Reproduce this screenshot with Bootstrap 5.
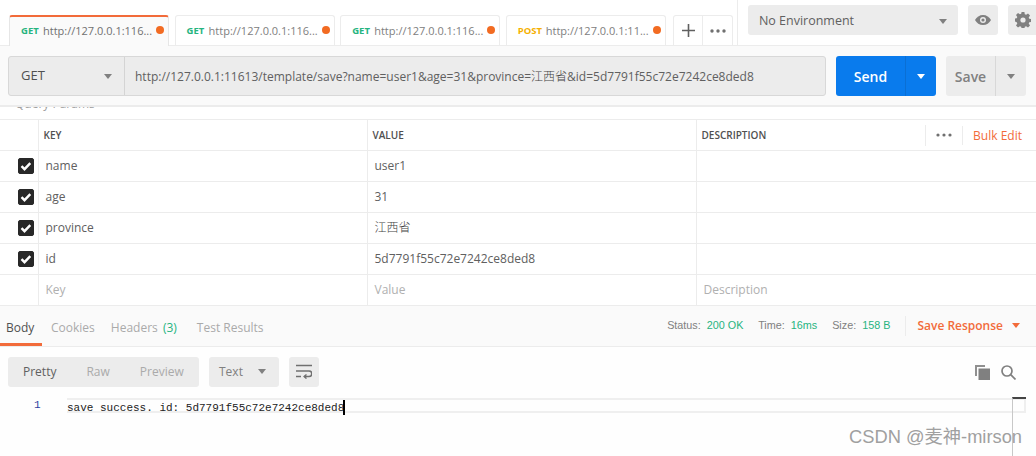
<!DOCTYPE html>
<html lang="zh">
  <head>
    <meta charset="UTF-8" />
    <title>Postman</title>
    <link href="https://cdn.jsdelivr.net/npm/bootstrap@5.3.3/dist/css/bootstrap.min.css" rel="stylesheet" />
    <style>
      html, body { height: 456px; overflow: hidden; }
      body {
        background-color: #fefefe;
        color: #505050;
        font-family: "Open Sans", "Noto Sans CJK SC", sans-serif;
        font-size: 12px;
      }
      .cjk { font-family: "Noto Sans CJK SC", sans-serif; color: #444; font-weight: 300; }

      /* top tabs */
      .top-bar { height: 45px; background: #fff; padding-left: 9px; }
      .req-tab {
        width: 160px; height: 30px; margin-top: 15px; margin-right: 5.6px; flex: none;
        border: 1px solid #ececec; border-bottom: 0; border-radius: 3px 3px 0 0;
        padding: 2px 4px 0 11px; font-size: 11px; color: #808080; white-space: nowrap;
        background: #fff;
      }
      .req-tab.on { border-top: 2px solid #f26b3a; border-left-color: #e6e6e6; border-right-color: #e6e6e6; color: #707070; position: relative; height: 31px; z-index: 2; background: #fafafa; padding-top: 0; }
      .verb { font-size: 9.5px; font-weight: 700; width: 22px; flex: none; }
      .verb-get { color: #26b47f; }
      .verb-post { color: #f5b000; width: 28px; }
      .tab-url { flex: 1; min-width: 0; }
      .dot { width: 8px; height: 8px; border-radius: 50%; background: #f26b22; flex: none; margin-left: 3px; margin-top: -3px; }
      .add-group {
        width: 60px; height: 30px; margin-top: 15px; margin-left: 1.5px; flex: none;
        border: 1px solid #ececec; border-bottom: 0; border-radius: 3px 3px 0 0;
      }
      .add-group > div { flex: 1; }
      .add-group > div + div { border-left: 1px solid #ececec; }
      .env-side { border-left: 1px solid #ececec; margin-left: 4px; padding-left: 10px; height: 45px; padding-top: 5px; gap: 10px; width: 305px; flex: none; }
      .env-select { width: 210px; height: 30px; background: #ececec; border-radius: 3px; padding: 2px 11px 0; font-size: 12.5px; color: #606060; flex: none; }
      .env-btn { width: 30px; height: 30px; background: #ececec; border-radius: 3px; flex: none; }
      .caret-dn { width: 0; height: 0; border-left: 4.5px solid transparent; border-right: 4.5px solid transparent; border-top: 5px solid #808080; flex: none; }
      .caret-white { border-top-color: #fff; }
      .caret-orange { border-top-color: #f26b3a; }

      /* request bar */
      .req-bar { height: 62px; background: #fafafa; border-top: 1px solid #ececec; border-bottom: 2px solid #ececec; padding: 10px 10px 0 8px; }
      .req-input { height: 40px; width: 818px; background: #ececec; border: 1px solid #d8d8d8; border-radius: 3px; flex: none; }
      .req-method { width: 116px; border-right: 1px solid #d4d4d4; padding: 0 12px; font-size: 13px; color: #505050; flex: none; }
      .req-url { padding-left: 10px; font-size: 12px; color: #606060; white-space: nowrap; }
      .send-btn { width: 100px; height: 40px; margin-left: 10px; padding: 0; background: #097bed; border-radius: 3px; color: #fff; font-size: 14px; font-weight: 600; flex: none; }
      .send-btn > span:first-child { width: 69px; }
      .send-btn > span:last-child { flex: 1; align-self: stretch; border-left: 1px solid #0a6fd4; }
      .save-btn { width: 80px; height: 40px; margin-left: 10px; background: #ececec; border-radius: 3px; color: #808080; font-size: 14px; font-weight: 600; flex: none; }
      .save-btn > span:first-child { width: 49px; }
      .save-btn > span:last-child { flex: 1; align-self: stretch; border-left: 1px solid #d8d8d8; }

      /* params */
      .params-cut { height: 12px; overflow: hidden; background: #fff; color: #a0a0a0; font-size: 12px; padding-left: 15px; border-bottom: 1px solid #ececec; box-sizing: content-box; }
      .params-cut span { display: block; line-height: 12px; margin-top: -9px; }
      .param-table { table-layout: fixed; width: 100%; margin: 0; --bs-table-bg: #fff; border-color: #ececec; }
      .param-table td, .param-table th { height: 31px; padding: 0 7px; border: 0; border-bottom: 1px solid #ececec; border-left: 1px solid #ececec; vertical-align: middle; font-size: 12px; color: #606060; font-weight: 400; box-shadow: none; }
      .param-table th { font-size: 10px; font-weight: 600; color: #505050; padding: 1px 5px 0; height: 30px; }
      .param-table tr > :first-child { border-left: 0; padding: 0 0 0 18px; }
      .param-table .ph { color: #b0b0b0; }
      .form-check-input.tick {
        width: 16px; height: 16px; margin: 0; display: block; border-radius: 2px;
        background-color: #282828; border-color: #282828; opacity: 1; background-size: 16px;
        background-image: url("data:image/svg+xml,%3csvg xmlns='http://www.w3.org/2000/svg' viewBox='0 0 16 16'%3e%3cpath fill='none' stroke='%23fff' stroke-width='2.4' d='M3.500 8.200l3 3 5.800-6'/%3e%3c/svg%3e");
      }
      .desc-tools { height: 21px; }
      .bulk { color: #f26b3a; font-size: 12px; font-weight: 400; padding: 2px 9px 0 10px; border-left: 1px solid #ececec; line-height: 16px; height: 19px; }
      .desc-dots { border-left: 1px solid #ececec; padding: 0 10px; height: 21px; }

      /* response */
      .res-tabs { height: 41px; background: #fafafa; border-bottom: 1px solid #ececec; padding-right: 16px; }
      .res-tab { height: 40px; padding: 0 6px; margin-right: 4px; font-size: 12px; color: #aaa; line-height: 44px; white-space: nowrap; }
      .res-tab.on { color: #505050; border-bottom: 3px solid #f26b3a; width: 42px; margin-right: 3px; }
      .green { color: #26b47f; }
      .res-tab .green { margin-left: 2px; }
      .res-meta { font-family: "Liberation Sans", sans-serif; font-size: 10.8px; color: #808080; white-space: nowrap; }
      .res-meta b { font-weight: 400; margin-left: 3px; margin-right: 12px; }
      .save-res { color: #f26b3a; font-size: 12px; font-weight: 600; border-left: 1px solid #ececec; height: 20px; margin-left: 3px; padding-left: 11px; gap: 9px; white-space: nowrap; }
      .res-tools { padding: 10px 9px 0 8px; height: 41px; gap: 10px; }
      .grey-box { height: 30px; background: #ececec; border-radius: 3px; font-size: 12px; color: #aaa; flex: none; }
      .fmt-group { width: 191px; padding-left: 15px; gap: 30px; }
      .fmt-group .act { color: #606060; }
      .type-box { width: 70px; padding: 0 13px 0 10px; color: #808080; }
      .wrap-box { width: 30px; }
      .res-icons { margin-top: 8px; margin-right: 11px; gap: 11px; }
      .code-wrap { margin-top: 10px; padding-left: 34px; height: 15px; }
      .ln { width: 33px; color: #2f3f9e; font-family: "Liberation Mono", monospace; font-size: 11px; line-height: 15px; flex: none; }
      .code-line { width: 959px; height: 15px; border: 2px solid #efefef; border-left: 0; font-family: "Liberation Mono", monospace; font-size: 11px; line-height: 9px; color: #222; white-space: nowrap; }
      .cursor { display: inline-block; width: 2px; height: 15px; background: #000; vertical-align: -4px; margin-left: -1px; }
      .scroll-mark { position: absolute; left: 1012px; top: 397px; bottom: 0; width: 14px; border-left: 1px solid #c8c8c8; border-top: 2px solid #444; }
      .wm { position: absolute; right: 14px; top: 426px; font-family: "Liberation Sans", "Noto Sans CJK SC", sans-serif; font-size: 18.3px; line-height: 22px; color: #a0a0a0; white-space: nowrap; }
    </style>
  </head>
  <body class="position-relative">
    <!-- top tabs -->
    <div class="top-bar d-flex">
      <div class="req-tab on d-flex align-items-center"><span class="verb verb-get">GET</span><span class="tab-url">http://127.0.0.1:116...</span><span class="dot"></span></div>
      <div class="req-tab d-flex align-items-center"><span class="verb verb-get">GET</span><span class="tab-url">http://127.0.0.1:116...</span><span class="dot"></span></div>
      <div class="req-tab d-flex align-items-center"><span class="verb verb-get">GET</span><span class="tab-url">http://127.0.0.1:116...</span><span class="dot"></span></div>
      <div class="req-tab d-flex align-items-center"><span class="verb verb-post">POST</span><span class="tab-url">http://127.0.0.1:11...</span><span class="dot"></span></div>
      <div class="add-group d-flex">
        <div class="d-flex align-items-center justify-content-center">
          <svg width="13" height="13" viewBox="0 0 13 13"><path d="M6.500 0v13M0 6.500h13" stroke="#606060" stroke-width="1.600"/></svg>
        </div>
        <div class="d-flex align-items-center justify-content-center">
          <svg width="16" height="4" viewBox="0 0 16 4"><circle cx="2" cy="2" r="1.700" fill="#707070"/><circle cx="8" cy="2" r="1.700" fill="#707070"/><circle cx="14" cy="2" r="1.700" fill="#707070"/></svg>
        </div>
      </div>
      <div class="env-side d-flex">
        <div class="env-select d-flex align-items-center justify-content-between"><span>No Environment</span><span class="caret-dn"></span></div>
        <div class="env-btn d-flex align-items-center justify-content-center">
          <svg width="16" height="10" viewBox="0 0 16 10"><path d="M8 0C4.500 0 1.600 2 0 5c1.600 3 4.500 5 8 5s6.400-2 8-5c-1.600-3-4.500-5-8-5z" fill="#808080"/><circle cx="8" cy="5" r="3" fill="#ececec"/><circle cx="8" cy="5" r="1.600" fill="#808080"/></svg>
        </div>
        <div class="env-btn d-flex align-items-center justify-content-center">
          <svg width="16" height="16" viewBox="0 0 16 16"><path d="M6.600 0h2.800l.4 2.200 1.300.6 1.900-1.300 2 2-1.300 1.900.6 1.300 2.200.4v2.800l-2.200.4-.6 1.300 1.300 1.900-2 2-1.900-1.300-1.300.6-.4 2.200H6.600l-.4-2.200-1.300-.6L3 15.500l-2-2 1.300-1.900-.6-1.300L-.5 9.400V6.600l2.200-.4.6-1.300L1 3l2-2 1.900 1.300 1.300-.6z" fill="#808080"/><circle cx="8" cy="8" r="2.600" fill="#ececec"/></svg>
        </div>
      </div>
    </div>

    <!-- request bar -->
    <div class="req-bar d-flex">
      <div class="req-input d-flex align-items-stretch">
        <div class="req-method d-flex align-items-center justify-content-between"><span>GET</span><span class="caret-dn"></span></div>
        <div class="req-url d-flex align-items-center"><span>http://127.0.0.1:11613/template/save?name=user1&amp;age=31&amp;province=<span class="cjk">江西省</span>&amp;id=5d7791f55c72e7242ce8ded8</span></div>
      </div>
      <div class="send-btn d-flex align-items-center">
        <span class="text-center">Send</span>
        <span class="d-flex align-items-center justify-content-center"><span class="caret-dn caret-white"></span></span>
      </div>
      <div class="save-btn d-flex align-items-center">
        <span class="text-center">Save</span>
        <span class="d-flex align-items-center justify-content-center"><span class="caret-dn"></span></span>
      </div>
    </div>

    <!-- params -->
    <div class="params-cut"><span>Query Params</span></div>
    <table class="table param-table">
      <colgroup><col style="width:38px" /><col style="width:329px" /><col style="width:329px" /><col /></colgroup>
      <thead>
        <tr>
          <th></th><th>KEY</th><th>VALUE</th>
          <th>
            <div class="d-flex align-items-center justify-content-between">
              <span>DESCRIPTION</span>
              <span class="desc-tools d-flex align-items-center">
                <span class="desc-dots d-flex align-items-center"><svg width="16" height="4" viewBox="0 0 16 4"><circle cx="2" cy="2" r="1.600" fill="#707070"/><circle cx="8" cy="2" r="1.600" fill="#707070"/><circle cx="14" cy="2" r="1.600" fill="#707070"/></svg></span>
                <span class="bulk">Bulk Edit</span>
              </span>
            </div>
          </th>
        </tr>
      </thead>
      <tbody>
        <tr><td><input class="form-check-input tick" type="checkbox" checked /></td><td>name</td><td>user1</td><td></td></tr>
        <tr><td><input class="form-check-input tick" type="checkbox" checked /></td><td>age</td><td>31</td><td></td></tr>
        <tr><td><input class="form-check-input tick" type="checkbox" checked /></td><td>province</td><td><span class="cjk">江西省</span></td><td></td></tr>
        <tr><td><input class="form-check-input tick" type="checkbox" checked /></td><td>id</td><td>5d7791f55c72e7242ce8ded8</td><td></td></tr>
        <tr><td></td><td class="ph">Key</td><td class="ph">Value</td><td class="ph">Description</td></tr>
      </tbody>
    </table>

    <!-- response -->
    <div class="res-tabs d-flex justify-content-between">
      <div class="d-flex">
        <div class="res-tab on">Body</div>
        <div class="res-tab">Cookies</div>
        <div class="res-tab me-2">Headers <span class="green">(3)</span></div>
        <div class="res-tab">Test Results</div>
      </div>
      <div class="d-flex align-items-center">
        <div class="res-meta">Status: <b class="green">200 OK</b> Time: <b class="green">16ms</b> Size: <b class="green">158 B</b></div>
        <div class="save-res d-flex align-items-center"><span>Save Response</span><span class="caret-dn caret-orange"></span></div>
      </div>
    </div>
    <div class="res-tools d-flex align-items-start">
      <div class="grey-box fmt-group d-flex align-items-center"><span class="act">Pretty</span><span>Raw</span><span>Preview</span></div>
      <div class="grey-box type-box d-flex align-items-center justify-content-between"><span>Text</span><span class="caret-dn"></span></div>
      <div class="grey-box wrap-box d-flex align-items-center justify-content-center">
        <svg width="16" height="15" viewBox="0 0 16 15" fill="none" stroke="#707070" stroke-width="1.500"><path d="M0 1.500h16M0 7h13a2.500 2.500 0 0 1 0 5.500H8.500M0 12.500h5"/><path d="M10.500 10.500l-2.300 2 2.300 2"/></svg>
      </div>
      <div class="ms-auto d-flex align-items-center res-icons">
        <svg width="15" height="15" viewBox="0 0 15 15"><path d="M0 0h10v2H2v9H0z" fill="#909090"/><path d="M3.500 3.500H15V15H3.500z" fill="#808080"/></svg>
        <svg width="15" height="15" viewBox="0 0 15 15" fill="none" stroke="#808080" stroke-width="1.700"><circle cx="6" cy="6" r="5"/><path d="M9.700 9.700L14.500 14.500"/></svg>
      </div>
    </div>
    <div class="code-wrap d-flex">
      <div class="ln">1</div>
      <div class="code-line">save success. id: 5d7791f55c72e7242ce8ded8<span class="cursor"></span></div>
    </div>

    <div class="scroll-mark"></div>
    <div class="wm">CSDN @麦神-mirson</div>

    <script src="https://cdn.jsdelivr.net/npm/bootstrap@5.3.3/dist/js/bootstrap.bundle.min.js"></script>
  </body>
</html>
